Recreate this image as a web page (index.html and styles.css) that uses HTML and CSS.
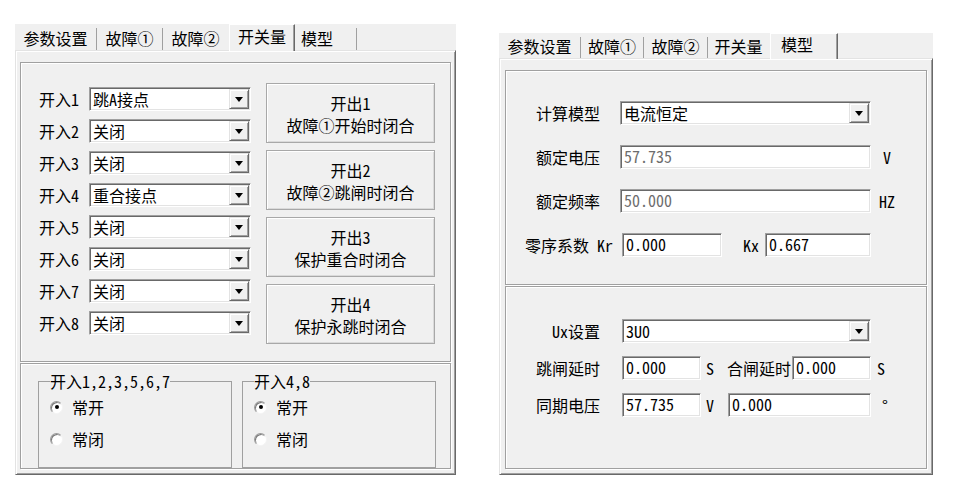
FILE: index.html
```html
<!DOCTYPE html>
<html lang="zh-CN">
<head>
<meta charset="utf-8">
<title>开关量 / 模型</title>
<link rel="stylesheet" href="styles.css">
</head>
<body>
<div class="page">
  <div class="dlg dlg-left">
    <div class="tabs">
      <div class="tab tab-4">参数设置</div>
      <div class="tab tab-3">故障①</div>
      <div class="tab tab-3 pre">故障②</div>
      <div class="tab tab-3 active">开关量</div>
      <div class="tab tab-last">模型</div>
    </div>
    <div class="body">
      <div class="box box-io">
        <div class="inputs">
          <div class="io-row"><span class="io-label">开入1</span><div class="combo io-combo"><span class="combo-text">跳A接点</span><span class="drop"><i></i></span></div></div>
          <div class="io-row"><span class="io-label">开入2</span><div class="combo io-combo"><span class="combo-text">关闭</span><span class="drop"><i></i></span></div></div>
          <div class="io-row"><span class="io-label">开入3</span><div class="combo io-combo"><span class="combo-text">关闭</span><span class="drop"><i></i></span></div></div>
          <div class="io-row"><span class="io-label">开入4</span><div class="combo io-combo"><span class="combo-text">重合接点</span><span class="drop"><i></i></span></div></div>
          <div class="io-row"><span class="io-label">开入5</span><div class="combo io-combo"><span class="combo-text">关闭</span><span class="drop"><i></i></span></div></div>
          <div class="io-row"><span class="io-label">开入6</span><div class="combo io-combo"><span class="combo-text">关闭</span><span class="drop"><i></i></span></div></div>
          <div class="io-row"><span class="io-label">开入7</span><div class="combo io-combo"><span class="combo-text">关闭</span><span class="drop"><i></i></span></div></div>
          <div class="io-row"><span class="io-label">开入8</span><div class="combo io-combo"><span class="combo-text">关闭</span><span class="drop"><i></i></span></div></div>
        </div>
        <div class="outputs">
          <div class="out-btn"><span class="ln">开出1</span><span class="ln">故障①开始时闭合</span></div>
          <div class="out-btn"><span class="ln">开出2</span><span class="ln">故障②跳闸时闭合</span></div>
          <div class="out-btn"><span class="ln">开出3</span><span class="ln">保护重合时闭合</span></div>
          <div class="out-btn"><span class="ln">开出4</span><span class="ln">保护永跳时闭合</span></div>
        </div>
      </div>
      <div class="box box-mode">
        <fieldset class="group">
          <legend>开入1,2,3,5,6,7</legend>
          <div class="radio-row first"><span class="radio checked"></span>常开</div>
          <div class="radio-row"><span class="radio"></span>常闭</div>
        </fieldset>
        <fieldset class="group">
          <legend>开入4,8</legend>
          <div class="radio-row first"><span class="radio checked"></span>常开</div>
          <div class="radio-row"><span class="radio"></span>常闭</div>
        </fieldset>
      </div>
    </div>
  </div>

  <div class="dlg dlg-right">
    <div class="tabs">
      <div class="tab tab-4">参数设置</div>
      <div class="tab tab-3a">故障①</div>
      <div class="tab tab-3b">故障②</div>
      <div class="tab tab-3c pre">开关量</div>
      <div class="tab tab-last active">模型</div>
    </div>
    <div class="body">
      <div class="box box-model">
        <div class="m-row">
          <span class="m-label">计算模型</span>
          <div class="combo f-wide"><span class="combo-text">电流恒定</span><span class="drop"><i></i></span></div>
        </div>
        <div class="m-row">
          <span class="m-label">额定电压</span>
          <div class="field f-wide disabled">57.735</div>
          <span class="unit u-v">V</span>
        </div>
        <div class="m-row">
          <span class="m-label">额定频率</span>
          <div class="field f-wide disabled">50.000</div>
          <span class="unit u-hz">HZ</span>
        </div>
        <div class="m-row">
          <span class="m-label m-label-k">零序系数 Kr</span>
          <div class="field f-kr">0.000</div>
          <span class="unit u-kx">Kx</span>
          <div class="field f-kx">0.667</div>
        </div>
      </div>
      <div class="box box-ux">
        <div class="u-row">
          <span class="m-label">Ux设置</span>
          <div class="combo f-ux"><span class="combo-text">3U0</span><span class="drop"><i></i></span></div>
        </div>
        <div class="u-row">
          <span class="m-label">跳闸延时</span>
          <div class="field f-short">0.000</div>
          <span class="unit u-s">S</span>
          <span class="u-mid">合闸延时</span>
          <div class="field f-short f-close">0.000</div>
          <span class="unit u-s2">S</span>
        </div>
        <div class="u-row">
          <span class="m-label">同期电压</span>
          <div class="field f-short">57.735</div>
          <span class="unit u-s">V</span>
          <div class="field f-angle">0.000</div>
          <span class="unit u-deg">°</span>
        </div>
      </div>
    </div>
  </div>
</div>
</body>
</html>
```

FILE: styles.css
```css
* { box-sizing: border-box; }

body {
  margin: 0;
  background: #fff;
  color: #000;
  font-family: "Noto Sans CJK SC", "Noto Sans", sans-serif;
  font-size: 16px;
  font-feature-settings: "hwid" 1;
}

.page {
  display: flex;
  align-items: flex-start;
  padding-left: 15px;
}

.dlg-left { margin-top: 24px; width: 441px; }
.dlg-right { margin-top: 33px; margin-left: 43px; width: 434px; }

/* ---------- tabs ---------- */
.tabs {
  display: flex;
  align-items: flex-end;
  height: 26px;
  background: #f0f0f0;
}
.dlg-right .tabs { height: 25px; }

.tab {
  height: 22px;
  line-height: 20px;
  text-align: center;
  white-space: nowrap;
  border-right: 1px solid #a0a0a0;
}
.dlg-right .tab { height: 21px; line-height: 19px; }

.tab-4 { width: 82px; }
.tab-3 { width: 66px; }
.tab-3a { width: 63px; }
.tab-3b { width: 64px; }
.tab-3c { width: 62px; }
.tab-last { width: 62px; text-align: left; padding-left: 6px; }
.tab.pre { border-right-color: transparent; }

.tab.active {
  height: 27px;
  line-height: 20px;
  padding-top: 1px;
  margin-bottom: -1px;
  border-top: 1px solid #fff;
  border-left: 1px solid #fff;
  border-right: 1px solid #696969;
  box-shadow: inset -1px 0 0 #a0a0a0;
  position: relative;
  z-index: 1;
  background: #f0f0f0;
}
.dlg-right .tab.active {
  width: 68px;
  height: 26px;
  line-height: 19px;
  padding-left: 10px;
}

/* ---------- tab page body ---------- */
.body {
  background: #f0f0f0;
  border: 1px solid;
  border-color: #e3e3e3 #696969 #696969 #e3e3e3;
  box-shadow: inset 1px 1px 0 #fff, inset -1px -1px 0 #a0a0a0;
  padding: 11px 4px 5px 4px;
}
.dlg-right .body { padding: 11px 5px 5px 5px; }

.box {
  border: 1px solid #a0a0a0;
  box-shadow: inset 1px 1px 0 #fff, 1px 1px 0 #fff;
}

/* ---------- 开关量 ---------- */
.box-io {
  height: 300px;
  display: flex;
  padding: 20px 0 0 18px;
}

.inputs {
  display: flex;
  flex-direction: column;
  gap: 8px;
  padding-top: 4px;
}

.io-row {
  display: flex;
  align-items: center;
  height: 24px;
}
.io-label { width: 50px; }
.io-combo { width: 162px; }

.combo, .field {
  height: 24px;
  background: #fff;
  border: 1px solid;
  border-color: #a0a0a0 #fff #fff #a0a0a0;
  box-shadow: inset 1px 1px 0 #696969, inset -1px -1px 0 #e3e3e3;
}

.combo {
  display: flex;
  padding: 1px;
}
.combo-text {
  flex: 1;
  padding-left: 2px;
  line-height: 21px;
  white-space: nowrap;
}

.drop {
  width: 20px;
  height: 100%;
  display: flex;
  align-items: center;
  justify-content: center;
  background: #f0f0f0;
  border: 1px solid;
  border-color: #e3e3e3 #696969 #696969 #e3e3e3;
  box-shadow: inset 1px 1px 0 #fff, inset -1px -1px 0 #a0a0a0;
}
.drop i {
  display: block;
  width: 0;
  height: 0;
  border-left: 4px solid transparent;
  border-right: 4px solid transparent;
  border-top: 5px solid #000;
  margin-top: 1px;
}

.outputs {
  margin-left: 15px;
  width: 169px;
  display: flex;
  flex-direction: column;
  gap: 7px;
}

.out-btn {
  height: 60px;
  display: flex;
  flex-direction: column;
  align-items: center;
  justify-content: center;
  text-align: center;
  background: #f0f0f0;
  border: 1px solid #a8a8a8;
  box-shadow: inset 1px 1px 0 #fff, inset -1px -1px 0 #dadada;
}
.out-btn .ln {
  display: block;
  line-height: 24px;
  height: 22px;
  white-space: nowrap;
}

.box-mode {
  margin-top: 1px;
  height: 106px;
  display: flex;
  gap: 10px;
  padding: 7px 0 0 17px;
}

.group {
  margin: 0;
  width: 194px;
  padding: 0 0 10px 11px;
  border: 1px solid #a0a0a0;
  min-width: 0;
}
.group legend {
  padding: 0;
  line-height: 20px;
}

.radio-row {
  display: flex;
  align-items: center;
  height: 22px;
  margin-top: 10px;
}
.radio-row.first { margin-top: 5px; }

.radio {
  width: 13px;
  height: 13px;
  margin-right: 9px;
  border-radius: 50%;
  background: #fff;
  border: 1px solid;
  border-color: #9a9a9a #f4f4f4 #f4f4f4 #9a9a9a;
  box-shadow: inset 1px 1px 0 #7a7a7a;
  display: flex;
  align-items: center;
  justify-content: center;
}
.radio.checked::after {
  content: "";
  width: 4px;
  height: 4px;
  border-radius: 50%;
  background: #000;
}

/* ---------- 模型 ---------- */
.box-model {
  height: 215px;
  padding-top: 30px;
  display: flex;
  flex-direction: column;
  gap: 20px;
}

.box-ux {
  margin-top: 1px;
  height: 183px;
  padding-top: 32px;
  display: flex;
  flex-direction: column;
  gap: 13px;
}

.m-row, .u-row {
  display: flex;
  align-items: center;
  height: 24px;
}

.m-label {
  width: 94px;
  text-align: right;
  white-space: nowrap;
  margin-right: 20px;
}
.u-row .m-label { margin-right: 22px; }
.m-label-k { width: 107px; margin-right: 9px; }

.field {
  padding-left: 3px;
  line-height: 21px;
  white-space: nowrap;
}
.field.disabled { color: #6d6d6d; }

.f-wide { width: 251px; }
.f-kr { width: 100px; }
.f-kx { width: 106px; }
.f-ux { width: 249px; }
.f-short { width: 79px; }
.f-close { margin-left: 1px; }
.f-angle { width: 143px; }

.unit { white-space: nowrap; }
.u-v { margin-left: 12px; }
.u-hz { margin-left: 8px; }
.u-kx { margin-left: 21px; margin-right: 6px; }
.u-s { margin-left: 5px; margin-right: 14px; }
.u-mid { margin-left: -1px; }
.u-s2 { margin-left: 6px; }
.u-deg { margin-left: 11px; }
```
